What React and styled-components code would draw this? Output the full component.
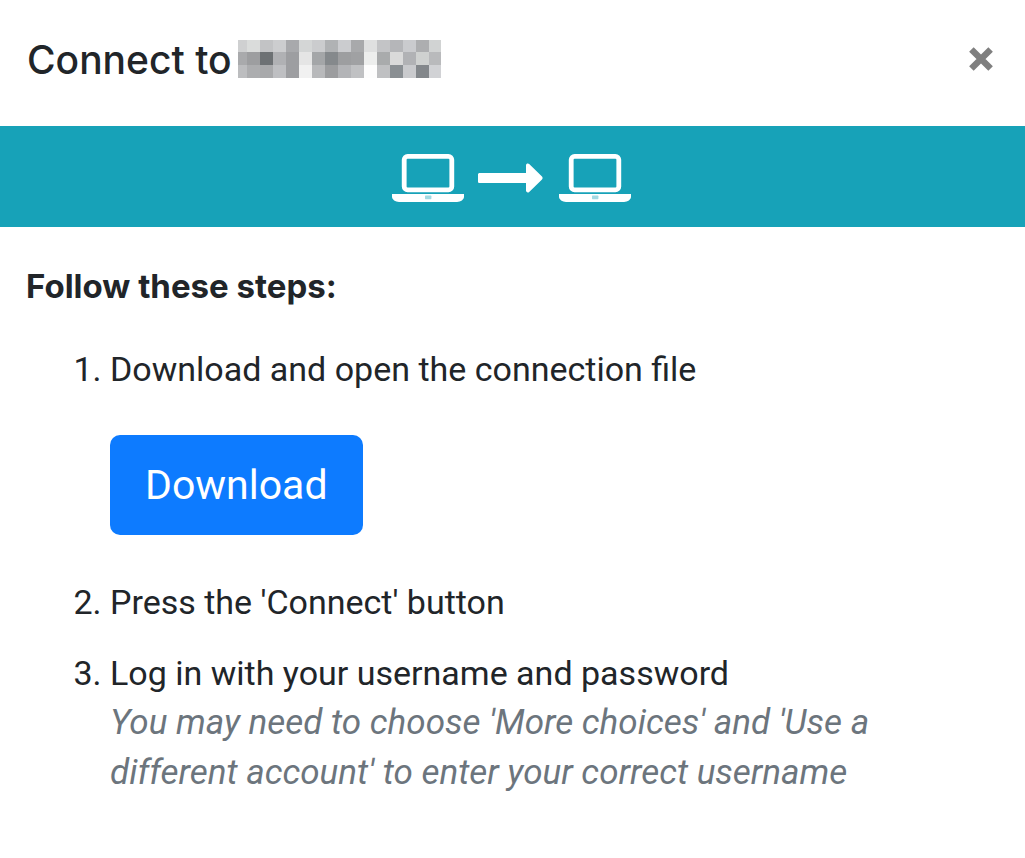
import React from "react";
import styled, { createGlobalStyle } from "styled-components";

const GlobalStyle = createGlobalStyle`
  *, *::before, *::after { box-sizing: border-box; }
  body {
    margin: 0;
    background: #fff;
    color: #212529;
    font-family: Roboto, "Liberation Sans", sans-serif;
    font-size: 34px;
    line-height: 50px;
  }
`;

const Dialog = styled.section`
  width: 100%;
  background: #fff;
`;

const Header = styled.header`
  display: flex;
  align-items: center;
  justify-content: space-between;
  padding: 35px 27px 41px;
`;

const Title = styled.h1`
  display: flex;
  align-items: center;
  gap: 6px;
  margin: 0;
  font-family: Inter, sans-serif;
  font-size: 39px;
  font-weight: 500;
  line-height: 50px;
`;

const CloseButton = styled.button`
  display: flex;
  padding: 4px 4px 6px;
  border: 0;
  background: transparent;
  color: #7f7f7f;
  cursor: pointer;
`;

const Banner = styled.div`
  display: flex;
  align-items: center;
  justify-content: center;
  gap: 15px;
  height: 101px;
  padding: 3px 2px 0 0;
  background: #17a2b8;
  color: #fff;
`;

const Body = styled.div`
  padding: 34px 26px;
`;

const Lead = styled.p`
  margin: 0 0 33px;
  font-family: Inter, sans-serif;
  font-size: 33px;
  font-weight: 700;
`;

const Steps = styled.ol`
  margin: 0;
  padding-left: 84px;
`;

const Step = styled.li`
  margin-bottom: 21px;
`;

const DownloadButton = styled.button`
  display: block;
  margin: 41px 0 42px;
  padding: 20px 35px;
  border: 0;
  border-radius: 10px;
  background: #0d7bff;
  color: #fff;
  font-family: inherit;
  font-size: 41px;
  line-height: 60px;
  cursor: pointer;
`;

const Hint = styled.em`
  display: block;
  color: #6c757d;
  font-size: 35px;
`;

const MOSAIC = [
  ["#cfd0d1", "#dadcdb", "#c2c3c5", "#cccdcf", "#a8a9ac", "#d4d6d6", "#cbccce", "#b0b2b4", "#cbcccf", "#a8a9ab", "#dfe0e0", "#c3c4c6", "#b5b6b9", "#cacbce", "#adaeb0", "#d1d3d3"],
  ["#a9aaac", "#9d9ea0", "#6d7174", "#b0b1b4", "#9d9ea1", "#e5e5e5", "#a4a6a8", "#85898c", "#9d9ea0", "#a0a1a3", "#edeeed", "#a9abac", "#dadada", "#b1b2b5", "#cfd1d0", "#b9babc"],
  ["#bcbdbf", "#acadaf", "#a8a9ab", "#bebfc2", "#9d9ea1", "#f1f1f1", "#b8b9bb", "#9c9d9f", "#b3b4b7", "#c0c1c3", "#fdfdfd", "#bfc0c2", "#8a8f93", "#c9cacd", "#83878b", "#d1d2d5"],
];

function MaskedName() {
  return (
    <svg width="203" height="40" viewBox="4 1 203 40" shapeRendering="crispEdges" role="img" aria-label="Hidden computer name">
      {MOSAIC.map((row, y) =>
        row.map((fill, x) => (
          <rect key={`${x}-${y}`} x={x * 13} y={y * 13} width="13" height="13" fill={fill} />
        ))
      )}
    </svg>
  );
}

function CloseIcon() {
  return (
    <svg width="26" height="26" viewBox="0 0 26 26" aria-hidden="true">
      <path d="M3.400 3.400 22.600 22.600M22.600 3.400 3.400 22.600" stroke="currentColor" strokeWidth="6.4" />
    </svg>
  );
}

function LaptopIcon() {
  return (
    <svg width="72" height="48" viewBox="0 0 72 48" aria-hidden="true">
      <rect x="12.2" y="2.4" width="47.6" height="33.4" rx="3.4" fill="none" stroke="currentColor" strokeWidth="4.8" />
      <path d="M0 40h72v2.600c0 3.200-3.400 5.400-7 5.400H7c-3.600 0-7-2.200-7-5.400z" fill="currentColor" />
      <rect x="33" y="41.600" width="6.4" height="3.6" rx="0.6" fill="#a3d9e2" />
    </svg>
  );
}

function ArrowIcon() {
  return (
    <svg width="65" height="48" viewBox="1 0 65 48" overflow="visible" aria-hidden="true">
      <path
        d="M1.600 19H48V11.400c0-1.800 2-2.400 3.200-1.300L64 22.600c.8.8.8 2 0 2.800L51.200 37.900c-1.200 1.100-3.200.5-3.200-1.300V29H1.600C.7 29 0 28.300 0 27.400V20.600C0 19.700.7 19 1.600 19z"
        fill="currentColor"
      />
    </svg>
  );
}

export default function App() {
  return (
    <>
      <GlobalStyle />
      <Dialog role="dialog" aria-labelledby="dialog-title">
        <Header>
          <Title id="dialog-title">
            Connect to
            <MaskedName />
          </Title>
          <CloseButton type="button" aria-label="Close">
            <CloseIcon />
          </CloseButton>
        </Header>
        <Banner>
          <LaptopIcon />
          <ArrowIcon />
          <LaptopIcon />
        </Banner>
        <Body>
          <Lead>Follow these steps:</Lead>
          <Steps>
            <Step>
              Download and open the connection file
              <DownloadButton type="button">Download</DownloadButton>
            </Step>
            <Step>Press the 'Connect' button</Step>
            <Step>
              Log in with your username and password
              <Hint>You may need to choose 'More choices' and 'Use a different account' to enter your correct username</Hint>
            </Step>
          </Steps>
        </Body>
      </Dialog>
    </>
  );
}
